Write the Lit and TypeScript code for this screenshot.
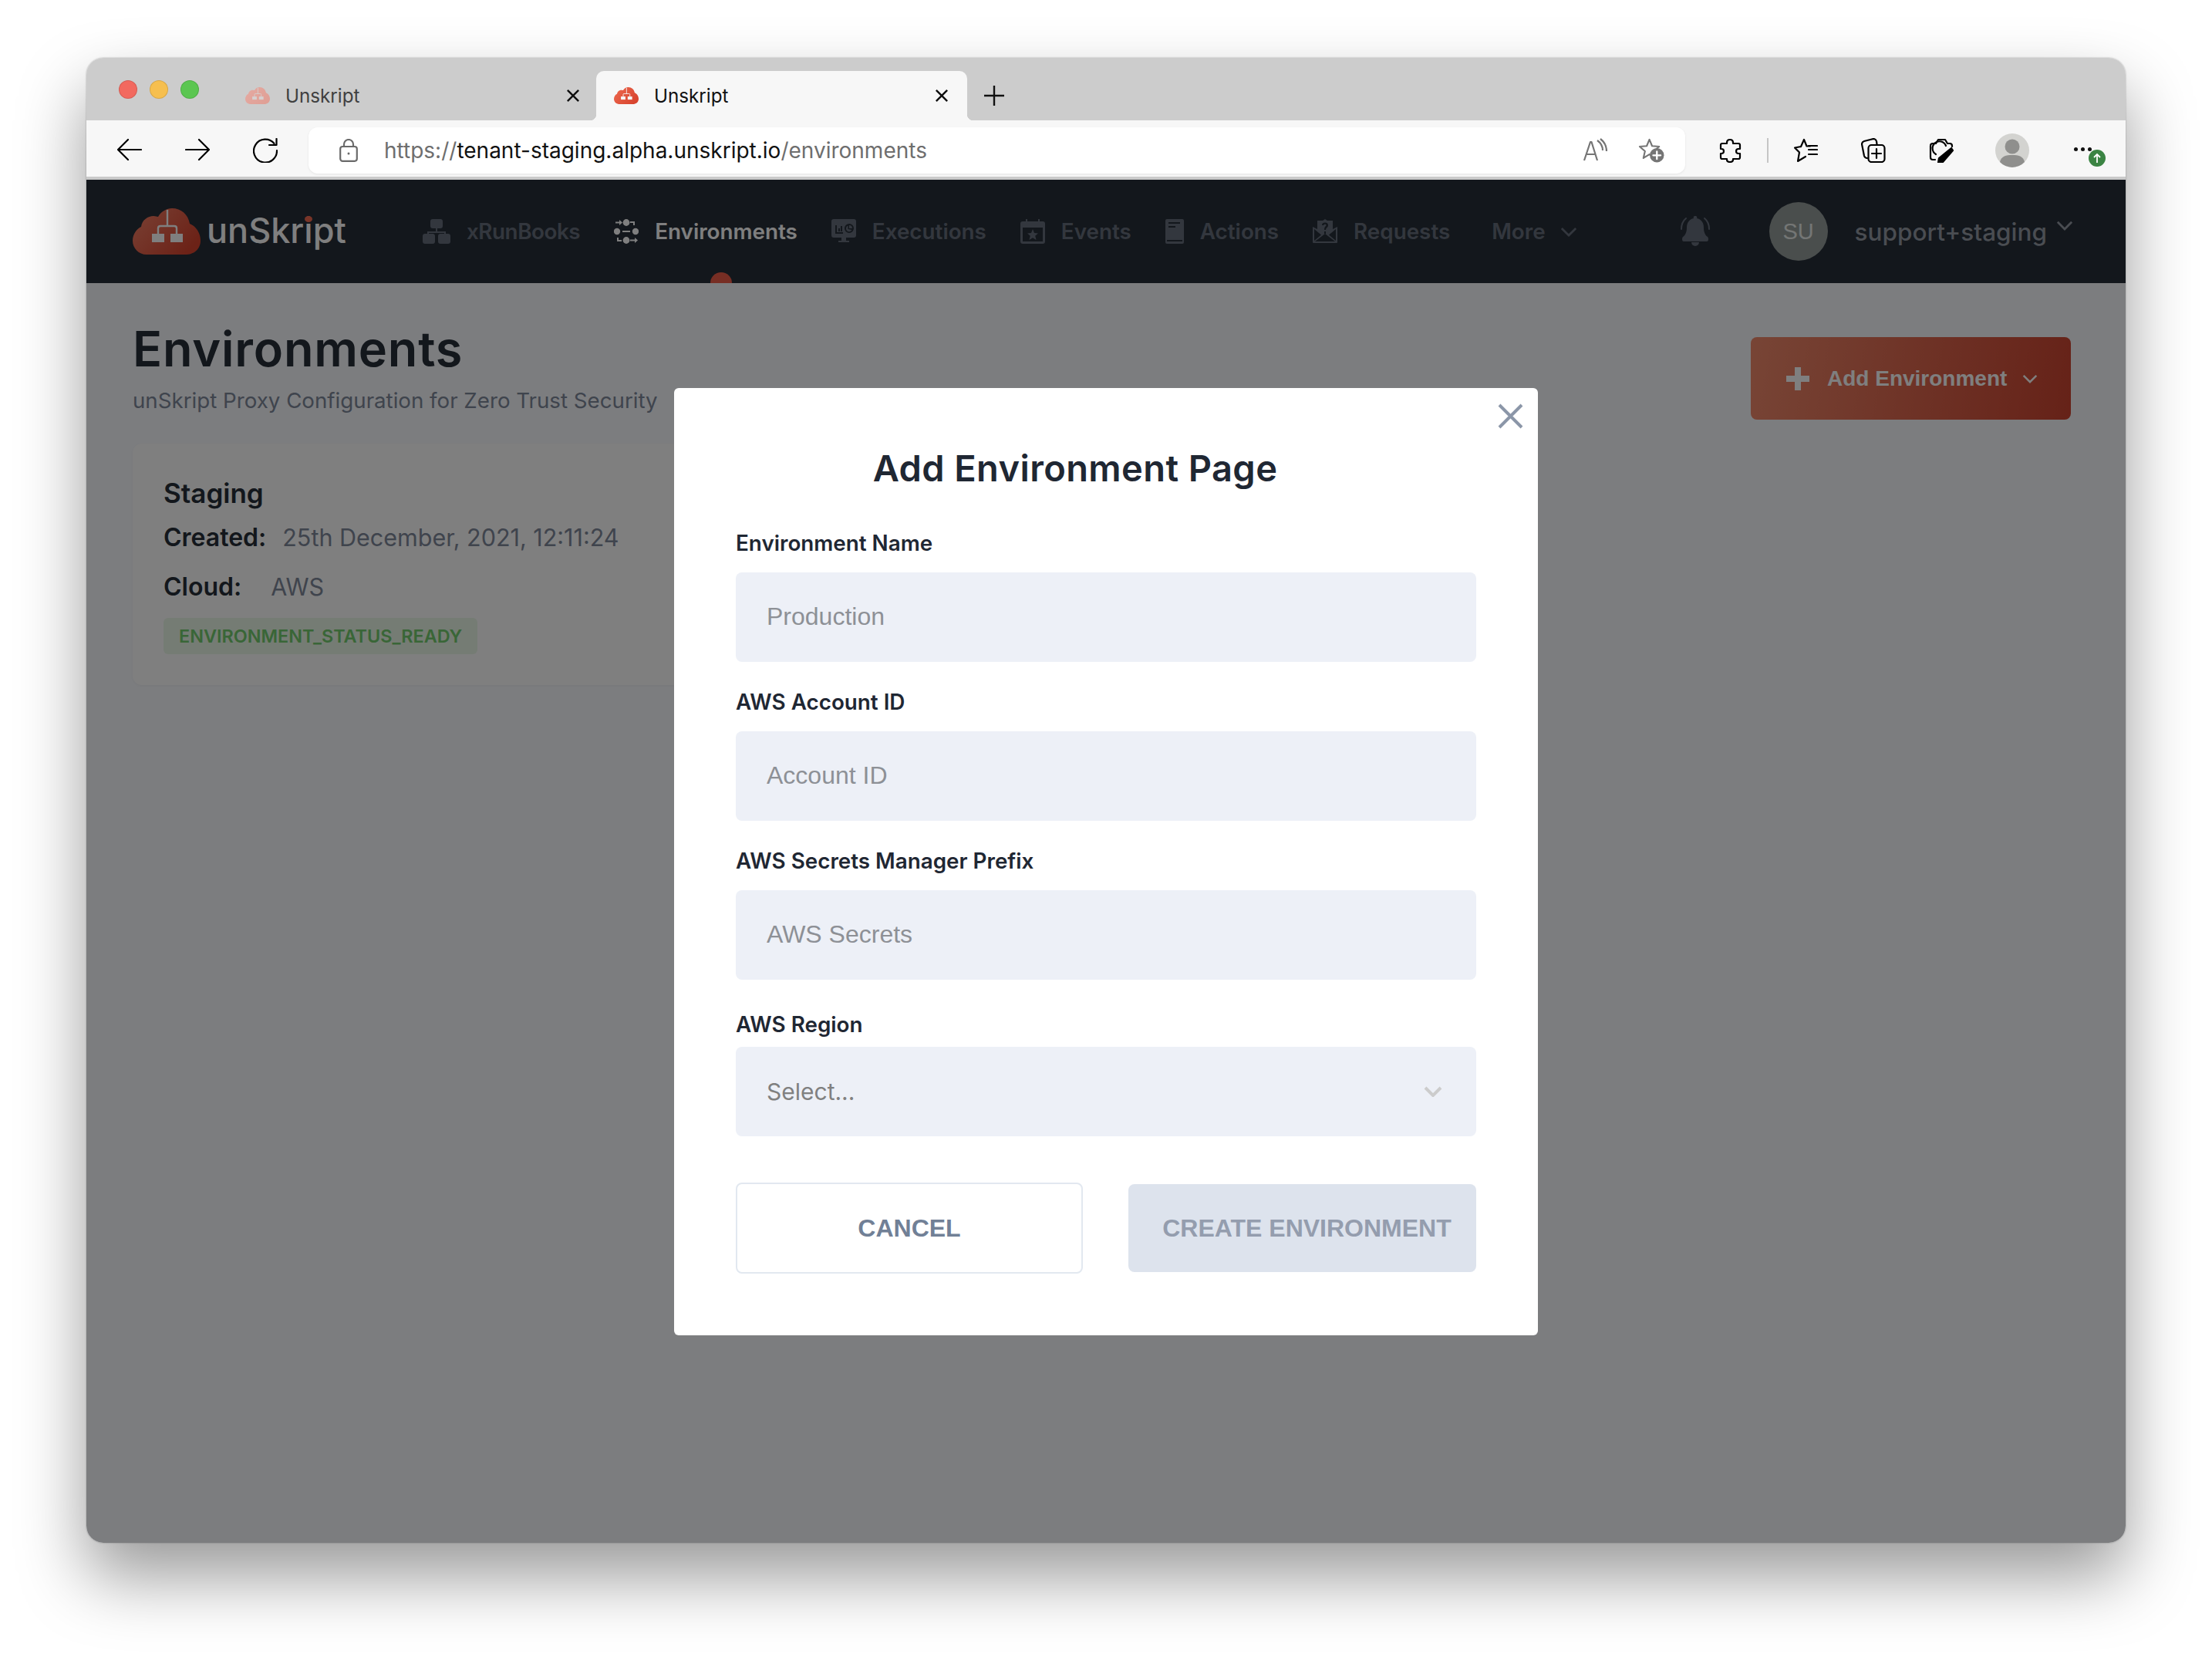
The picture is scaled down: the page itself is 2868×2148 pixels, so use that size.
import { LitElement, html, svg, css } from 'lit';
import { customElement } from 'lit/decorators.js';

// ==========================================
// Icons
// ==========================================

const cloud = (a: string, b: string, glyph: string, id: string) => html`
  <svg class="cloud" viewBox="0 0 88 60">
    <defs>
      <linearGradient id=${id} x1="0" y1="0" x2="1" y2="0.6">
        <stop offset="0" stop-color=${a}></stop>
        <stop offset="1" stop-color=${b}></stop>
      </linearGradient>
    </defs>
    <path
      fill="url(#${id})"
      d="M18 60C8 60 0 52 0 42C0 33 6 26 11 24C12 15 20 10 27 10C30 10 31 11 33 11C37 4 44 0 51 0C63 0 72 8 74 20C82 23 88 32 88 42C88 52 80 60 70 60Z"
    ></path>
    <path fill="none" stroke=${glyph} stroke-width="2.4" d="M45 2V23M33 33V26Q33 23 36 23H54Q57 23 57 26V33"></path>
    <rect x="25" y="33" width="16" height="11" fill=${glyph}></rect>
    <rect x="49" y="33" width="16" height="11" fill=${glyph}></rect>
  </svg>
`;

const closeX = html`<svg class="tab-x" viewBox="0 0 14 14"><path d="M2 2L12 12M12 2L2 12"></path></svg>`;

const chevron = html`<svg viewBox="0 0 24 14"><path d="M2 2L12 12L22 2" fill="none" stroke="currentColor" stroke-width="3"></path></svg>`;

const star = 'M16 3L19.6 11.6L29 12.4L21.9 18.5L24 27.7L16 22.8L8 27.7L10.1 18.5L3 12.4L12.4 11.6Z';

const navIcons = {
  runbooks: html`<svg viewBox="0 0 36 32"><rect x="10" y="0" width="16" height="12" rx="3"></rect><path d="M17 12h2v4h11v3h-2v-1H8v1H6v-3h11z"></path><rect x="0" y="19" width="16" height="13" rx="3"></rect><rect x="20" y="19" width="16" height="13" rx="3"></rect></svg>`,
  env: html`<svg viewBox="0 0 32 32">
    <circle cx="16" cy="4.5" r="4.4"></circle><circle cx="4" cy="16" r="4.2"></circle><circle cx="28" cy="16" r="4.2"></circle><circle cx="16" cy="27.5" r="4.4"></circle>
    <path d="M2 3.5h5V1l4 3.5L7 8V5.5H2zM21 3h6v5h-2V5h-4zM11 15h10v2H11zM4 24h2v3h4v2H4zM21 26.500h6V24l4 3.500L27 31v-2.500h-6z"></path>
  </svg>`,
  exec: html`<svg viewBox="0 0 32 32">
    <path fill-rule="evenodd" d="M3 0H29Q32 0 32 3V21Q32 24 29 24H3Q0 24 0 21V3Q0 0 3 0ZM5 8V19H15V17H7V8ZM9 12V16H11V12ZM12 9V16H14V9ZM23 6A6 6 0 1 0 23 18A6 6 0 1 0 23 6Z"></path>
    <path d="M23 8V12H27A4 4 0 0 0 23 8ZM21.500 8.500A4 4 0 1 0 26.500 14L21.500 13Z"></path>
    <path d="M13 24H19V28H23V30H9V28H13Z"></path>
  </svg>`,
  events: html`<svg viewBox="0 0 32 32">
    <path fill-rule="evenodd" d="M7 0H9V3H23V0H25V3H29Q32 3 32 6V29Q32 32 29 32H3Q0 32 0 29V6Q0 3 3 3H7ZM3 11V29H29V11Z"></path>
    <path d="M16 13L18 18L23 18.500L19.200 21.800L20.500 27L16 24.200L11.500 27L12.800 21.800L9 18.500L14 18Z"></path>
  </svg>`,
  actions: html`<svg viewBox="0 0 24 32">
    <path fill-rule="evenodd" d="M2 0H22Q24 0 24 2V30Q24 32 22 32H2Q0 32 0 30V2Q0 0 2 0ZM4 4V6H19V4ZM4 9V11H13V9ZM2 27V29H22V27Z"></path>
  </svg>`,
  requests: html`<svg viewBox="0 0 32 32">
    <path fill-rule="evenodd" d="M16 0L19 2H26V13L32 10V30Q32 31 31 31H1Q0 31 0 30V10L6 13V2H13ZM15 16V19H17V16ZM12 8H14.200Q14.500 6.500 16 6.500Q17.500 6.500 17.500 8Q17.500 9 16 10Q15 11 15 14H17Q17 12 18.500 11Q20 10 20 8Q20 4.500 16 4.500Q12 4.500 12 8ZM2 13V28L11 20.500ZM30 13L21 20.500L30 28ZM3 29H29L16 19Z"></path>
  </svg>`,
  bell: svg`
    <path d="M19 0A2 2 0 0 1 21 3C27 4 30 9 30 15C30 21 32 25 35 27Q36 28 36 30Q36 33 34 33H4Q2 33 2 30Q2 28 3 27C6 25 8 21 8 15C8 9 11 4 17 3A2 2 0 0 1 19 0Z"></path>
    <path d="M14 34H24A5 5 0 0 1 14 34Z"></path>
    <path d="M7 3Q1 8 1 17M31 3Q37 8 37 17" fill="none" stroke="currentColor" stroke-width="2" stroke-linecap="round"></path>
  `,
};

// ==========================================
// Form data
// ==========================================

const fields = [
  { label: 'Environment Name', placeholder: 'Production' },
  { label: 'AWS Account ID', placeholder: 'Account ID' },
  { label: 'AWS Secrets Manager Prefix', placeholder: 'AWS Secrets' },
];

const navItems = [
  { label: 'xRunBooks', icon: navIcons.runbooks, cls: 'w36 tight' },
  { label: 'Environments', icon: navIcons.env, cls: 'w32 on' },
  { label: 'Executions', icon: navIcons.exec, cls: 'w32' },
  { label: 'Events', icon: navIcons.events, cls: 'w32' },
  { label: 'Actions', icon: navIcons.actions, cls: 'w24' },
  { label: 'Requests', icon: navIcons.requests, cls: 'w32' },
];

@customElement('app-root')
export class AppRoot extends LitElement {
  static styles = css`
    :host {
      display: block;
      width: 2868px;
      height: 2148px;
      padding: 75px 112px 148px;
      box-sizing: border-box;
      background: #fff;
      font-family: 'Inter', 'Liberation Sans', sans-serif;
    }

    * {
      box-sizing: border-box;
    }

    svg {
      display: block;
    }

    .window {
      height: 100%;
      display: flex;
      flex-direction: column;
      border-radius: 22px;
      overflow: hidden;
      box-shadow: 0 44px 88px rgba(0, 0, 0, 0.4), 0 0 2px rgba(0, 0, 0, 0.35);
    }

    /* Tab strip */
    .tabs {
      height: 81px;
      flex: none;
      display: flex;
      align-items: flex-end;
      background: #cccccc;
      padding-left: 42px;
    }

    .lights {
      align-self: flex-start;
      display: flex;
      gap: 16px;
      margin-top: 29px;
      width: 141px;
    }

    .light {
      width: 24px;
      height: 24px;
      border-radius: 50%;
      border: 1px solid rgba(0, 0, 0, 0.12);
    }

    .red { background: #f2695f; }
    .yellow { background: #f6bf4f; }
    .green { background: #5bc651; }

    .tab {
      position: relative;
      width: 481px;
      height: 64px;
      padding: 0 23px 0 23px;
      display: flex;
      align-items: center;
      gap: 20px;
      color: #3c3c3c;
      font-size: 24.2px;
    }

    .tab .cloud {
      width: 32px;
      height: 22px;
    }

    .tab.idle {
      width: 478px;
      padding-right: 20px;
      color: #404040;
    }

    .tab.active {
      background: #f7f7f7;
      border-radius: 10px 10px 0 0;
      color: #111;
    }

    .tab.active::before,
    .tab.active::after {
      content: '';
      position: absolute;
      bottom: 0;
      width: 8px;
      height: 8px;
    }

    .tab.active::before {
      left: -8px;
      background: radial-gradient(circle at 0 0, transparent 8px, #f7f7f7 8.5px);
    }

    .tab.active::after {
      right: -8px;
      background: radial-gradient(circle at 100% 0, transparent 8px, #f7f7f7 8.5px);
    }

    .tab-x {
      width: 20px;
      height: 20px;
      margin-left: auto;
      fill: none;
      stroke: #111;
      stroke-width: 1.7;
    }

    .newtab {
      width: 28px;
      height: 28px;
      margin: 0 0 18px 21px;
      fill: none;
      stroke: #111;
      stroke-width: 2.4;
    }

    /* Toolbar */
    .toolbar {
      height: 77px;
      flex: none;
      display: flex;
      align-items: center;
      padding: 4px 0 0 40px;
      gap: 56px;
      background: #f7f7f7;
      border-bottom: 4px solid #c9c9c9;
      position: relative;
    }

    .tool {
      width: 32px;
      height: 32px;
      flex: none;
      fill: none;
      stroke: #000;
      stroke-width: 2.2;
      stroke-linejoin: round;
      stroke-linecap: round;
    }

    .address {
      width: 1785px;
      height: 60px;
      margin-left: -16px;
      padding: 0 27px 0 40px;
      display: flex;
      align-items: center;
      background: #fff;
      border-radius: 12px;
      box-shadow: 0 1px 3px rgba(0, 0, 0, 0.08);
      font-size: 28px;
      color: #6e6e6e;
      white-space: nowrap;
    }

    .lock {
      width: 24px;
      height: 30px;
      flex: none;
      margin-right: 34px;
      fill: none;
      stroke: #6a6a6a;
      stroke-width: 2.2;
    }

    .address b {
      font-weight: 400;
      color: #111;
    }

    .address-tools {
      margin-left: auto;
      display: flex;
      align-items: center;
      gap: 39px;
    }

    .muted {
      stroke: #757575;
    }

    .tool.star-add {
      width: 35px;
      height: 33px;
    }

    .tools {
      display: flex;
      align-items: center;
      gap: 56px;
      margin-left: -14px;
    }

    .tools-group {
      display: flex;
      align-items: center;
      gap: 32px;
    }

    .divider {
      width: 2px;
      height: 32px;
      background: #c6c6c6;
    }

    .profile {
      width: 44px;
      height: 44px;
      margin: 0 2px 0 -2px;
      flex: none;
    }

    .more {
      position: relative;
      width: 26px;
      height: 6px;
      margin-top: -1px;
      display: flex;
      gap: 4px;
    }

    .more i {
      width: 5px;
      height: 5px;
      border-radius: 50%;
      background: #111;
    }

    .update {
      position: absolute;
      left: 19px;
      top: 3px;
      width: 22px;
      height: 22px;
      border-radius: 50%;
      background: #3b8443;
      display: flex;
      align-items: center;
      justify-content: center;
    }

    .update svg {
      width: 14px;
      height: 14px;
      fill: none;
      stroke: #fff;
      stroke-width: 1.800;
    }

    /* App content, the overlay sits on top of all of it */
    .viewport {
      position: relative;
      flex: 1;
      display: flex;
      flex-direction: column;
      min-height: 0;
    }

    .nav {
      position: relative;
      height: 134px;
      flex: none;
      overflow: hidden;
      display: flex;
      align-items: center;
      padding: 0 68px 0 60px;
      background: #262e38;
      color: #666e7c;
    }

    .logo {
      display: flex;
      align-items: center;
      gap: 8px;
      width: 376px;
      flex: none;
      color: #fff;
      font-size: 45px;
      font-weight: 500;
    }

    .logo > span {
      margin-top: -3px;
    }

    .logo .cloud {
      width: 88px;
      height: 60px;
    }

    .tittle-i {
      position: relative;
    }

    .tittle-i::after {
      content: '';
      position: absolute;
      left: 1px;
      top: 9px;
      width: 10px;
      height: 8px;
      border-radius: 50%;
      background: #f2694f;
    }

    .nav-list {
      display: flex;
      align-items: center;
      gap: 44px;
    }

    .nav-item {
      display: flex;
      align-items: center;
      gap: 21px;
      font-size: 27.800px;
      font-weight: 600;
    }

    .nav-item.tight {
      letter-spacing: -0.45px;
    }

    .nav-item svg {
      height: 32px;
      fill: currentColor;
    }

    .nav-item.w36 svg { width: 36px; }
    .nav-item.w32 svg { width: 32px; }
    .nav-item.w24 svg { width: 24px; }

    .nav-item.on {
      color: #fff;
    }

    .nav-more {
      display: flex;
      align-items: center;
      gap: 19px;
      margin-left: 54px;
      font-size: 27.800px;
      font-weight: 600;
    }

    .nav-more svg {
      width: 22px;
      height: 13px;
    }

    .nav-right {
      margin-left: auto;
      display: flex;
      align-items: center;
    }

    .bell {
      width: 38px;
      height: 40px;
      fill: currentColor;
      margin-right: 77px;
    }

    .avatar {
      width: 76px;
      height: 76px;
      border-radius: 50%;
      margin-right: 35px;
      display: flex;
      align-items: center;
      justify-content: center;
      background: #949c9a;
      color: #e8ecea;
      font-size: 29px;
      font-family: 'Liberation Sans', sans-serif;
    }

    .user {
      color: #949aa4;
      font-size: 31.500px;
      font-weight: 500;
    }

    .user-chevron {
      width: 22px;
      height: 12px;
      margin: -16px 0 0 12px;
      color: #949aa4;
    }

    .marker {
      position: absolute;
      left: 809px;
      top: 120px;
      width: 28px;
      height: 28px;
      border-radius: 50%;
      background: #ee5d48;
    }

    .page {
      flex: 1;
      background: #f8fafe;
      padding: 47px 71px 0 60px;
    }

    .page-head {
      display: flex;
      justify-content: space-between;
      align-items: flex-start;
    }

    h1 {
      margin: 0;
      font-size: 63px;
      line-height: 76px;
      font-weight: 600;
      letter-spacing: 0.8px;
      color: #262e38;
    }

    .sub {
      margin: 9px 0 0;
      font-size: 27.700px;
      line-height: 40px;
      color: #7e889a;
    }

    .add {
      width: 415px;
      height: 107px;
      margin-top: 23px;
      border: 0;
      border-radius: 8px;
      display: flex;
      align-items: center;
      padding: 0 0 0 46px;
      background: linear-gradient(100deg, #f08a6c, #cc4430);
      color: #fff;
      font: 700 28px 'Liberation Sans', sans-serif;
    }

    .add .plus {
      width: 30px;
      height: 30px;
      margin-right: 23px;
      fill: currentColor;
    }

    .add .down {
      width: 20px;
      height: 12px;
      margin-left: 20px;
    }

    .card {
      width: 900px;
      height: 313px;
      margin-top: 31px;
      padding: 41px 40px 0;
      border-radius: 12px;
      background: #fff;
      box-shadow: 0 1px 3px rgba(0, 0, 0, 0.04);
      color: #262e38;
    }

    .card h2 {
      margin: 0;
      font-size: 35px;
      line-height: 46px;
      font-weight: 600;
    }

    .row {
      display: flex;
      font-size: 30.500px;
      line-height: 44px;
      margin-top: 13px;
      color: #7e889a;
    }

    .row + .row {
      margin-top: 20px;
    }

    .row strong {
      color: #262e38;
      font-size: 32px;
      font-weight: 600;
    }

    .row .created { margin-right: 21px; }
    .row .cloud-label { margin-right: 38px; }

    .badge {
      display: inline-block;
      margin-top: 18px;
      height: 47px;
      padding: 0 20px;
      border-radius: 6px;
      background: #ebf8e8;
      color: #72cc6e;
      font-size: 23.400px;
      font-weight: 600;
      line-height: 47px;
    }

    /* Modal */
    .overlay {
      position: absolute;
      inset: 0;
      display: flex;
      align-items: center;
      justify-content: center;
      background: rgba(0, 0, 0, 0.5);
    }

    .modal {
      position: relative;
      width: 1120px;
      padding: 76px 80px 80px;
      border-radius: 6px;
      background: #fff;
      color: #1f2733;
    }

    .modal-x {
      position: absolute;
      top: 20px;
      right: 19px;
      width: 33px;
      height: 33px;
      fill: none;
      stroke: #8b96a8;
      stroke-width: 4;
    }

    .modal h3 {
      margin: 0;
      padding-right: 80px;
      text-align: center;
      font-size: 47px;
      line-height: 56px;
      font-weight: 600;
      letter-spacing: 0.4px;
    }

    .field {
      margin-top: 32px;
    }

    .modal h3 + .field {
      margin-top: 49px;
    }

    .field label {
      display: block;
      margin-bottom: 18px;
      font-size: 27.800px;
      line-height: 40px;
      font-weight: 600;
    }

    .field input {
      display: block;
      width: 100%;
      height: 116px;
      padding: 0 40px;
      border: 0;
      border-radius: 8px;
      background: #edf0f7;
      font: 32px 'Liberation Sans', sans-serif;
      outline: none;
    }

    .field input::placeholder {
      color: #8d9096;
      opacity: 1;
    }

    .field.region {
      margin-top: 38px;
    }

    .field.region label {
      margin-bottom: 9px;
    }

    .select {
      height: 116px;
      padding: 0 44px 0 40px;
      display: flex;
      align-items: center;
      justify-content: space-between;
      border-radius: 8px;
      background: #edf0f7;
      color: #808080;
      font-size: 30px;
    }

    .select svg {
      width: 24px;
      height: 14px;
      color: #cccccc;
    }

    .select svg path {
      stroke-width: 4;
    }

    .actions {
      display: grid;
      grid-template-columns: 450px 451px;
      justify-content: space-between;
      align-items: center;
      margin-top: 60px;
    }

    .actions button {
      border-radius: 8px;
      padding-top: 2px;
      font: 700 32px 'Liberation Sans', sans-serif;
    }

    .cancel {
      height: 118px;
      background: #fff;
      border: 2px solid #e2e8f0;
      color: #718096;
    }

    .actions .create {
      height: 114px;
      padding: 2px 0 0 12px;
      border: 0;
      background: #dde3ed;
      color: #949dae;
    }
  `;

  render() {
    return html`
      <div class="window">
        <div class="tabs">
          <div class="lights">
            <span class="light red"></span>
            <span class="light yellow"></span>
            <span class="light green"></span>
          </div>
          <div class="tab idle">
            ${cloud('#e5aaa2', '#e0a096', '#d6d0cf', 'fav-a')}
            <span>Unskript</span>
            ${closeX}
          </div>
          <div class="tab active">
            ${cloud('#ee6a50', '#d8452f', '#f7f7f7', 'fav-b')}
            <span>Unskript</span>
            ${closeX}
          </div>
          <svg class="newtab" viewBox="0 0 28 28"><path d="M14 1V27M1 14H27"></path></svg>
        </div>

        <div class="toolbar">
          <svg class="tool" viewBox="0 0 32 32"><path d="M31 15H2M14 2L1 15L14 28"></path></svg>
          <svg class="tool" viewBox="0 0 32 32"><path d="M1 15H30M18 2L31 15L18 28"></path></svg>
          <svg class="tool" viewBox="0 0 32 32"><path d="M30.500 1V9H21M27.500 7A15 15 0 1 0 31 16"></path></svg>
          <div class="address">
            <svg class="lock" viewBox="0 0 24 30">
              <rect x="1.200" y="10" width="21.600" height="18.800" rx="3"></rect>
              <path d="M6 10V7A6 6 0 0 1 18 7V10"></path>
              <circle cx="12" cy="19" r="1.500" fill="#6a6a6a" stroke="none"></circle>
            </svg>
            <span>https://<b>tenant-staging.alpha.unskript.io</b>/environments</span>
            <div class="address-tools">
              <svg class="tool muted" viewBox="0 0 32 32">
                <path d="M2 29L10 5H11.500L19 29M5 21H16.500M19 3Q26 8 26 16M23 1Q31 7 31 17" stroke-linecap="butt"></path>
              </svg>
              <svg class="tool muted star-add" viewBox="0 0 36 34">
                <path d=${star}></path>
                <circle cx="26" cy="24" r="9.500" fill="#757575" stroke="none"></circle>
                <path d="M26 19V29M21 24H31" stroke="#fff" stroke-width="2.400"></path>
              </svg>
            </div>
          </div>
          <div class="tools">
            <div class="tools-group">
              <svg class="tool" viewBox="0 0 32 32">
                <path d="M12 6Q12 2 16 2Q20 2 20 6V7H27Q29 7 29 9V14H27Q24 14 24 17Q24 20 27 20H29V25Q29 27 27 27H20V28Q20 31 16 31Q12 31 12 28V27H6Q4 27 4 25V20H5Q8 20 8 17Q8 14 5 14H4V9Q4 7 6 7H12Z"></path>
              </svg>
              <div class="divider"></div>
              <svg class="tool" viewBox="0 0 32 32">
                <path d="M10 11L14 2L17.500 10.500H22M10 11L2 12.500L8 18.500L6 30L16 24"></path>
                <path d="M20 15H31M20 21H31M20 10H31"></path>
              </svg>
            </div>
            <svg class="tool" viewBox="0 0 32 32">
              <path d="M8 26Q5 26 4 23L1 8Q1 5 4 4L16 1Q19 1 20 4L20.500 8"></path>
              <rect x="9.500" y="9" width="21" height="22" rx="4"></rect>
              <path d="M20 14V26M14 20H26"></path>
            </svg>
            <svg class="tool" viewBox="0 0 32 32">
              <path d="M8 28H5Q2 28 2 25V10Q2 7 5 7H9L12 2H21L24 7H27Q30 7 30 10V11"></path>
              <path d="M9 21A9 9 0 1 1 22 10"></path>
              <path d="M29 13L31 16L18 31L12 32L13 26Z" fill="#000"></path>
            </svg>
            <svg class="profile" viewBox="0 0 44 44">
              <circle cx="22" cy="22" r="22" fill="#d3d3d0"></circle>
              <ellipse cx="22" cy="17" rx="9.500" ry="9.500" fill="#8f8f8d"></ellipse>
              <path d="M6 37C8 29 14 28 22 28C30 28 36 29 38 37A22 22 0 0 1 6 37Z" fill="#8f8f8d"></path>
            </svg>
            <div class="more">
              <i></i><i></i><i></i>
              <span class="update">
                <svg viewBox="0 0 14 14"><path d="M7 13V2M3 6L7 2L11 6"></path></svg>
              </span>
            </div>
          </div>
        </div>

        <div class="viewport">
          <div class="nav">
            <div class="logo">
              ${cloud('#f4836a', '#d8452f', '#ffffff', 'logo')}
              <span>unSkr<span class="tittle-i">i</span>pt</span>
            </div>
            <div class="nav-list">
              ${navItems.map(
                (item) => html`
                  <div class="nav-item ${item.cls}">${item.icon}<span>${item.label}</span></div>
                `
              )}
            </div>
            <div class="nav-more"><span>More</span>${chevron}</div>
            <div class="nav-right">
              <svg class="bell" viewBox="0 0 38 40">${navIcons.bell}</svg>
              <div class="avatar">SU</div>
              <span class="user">support+staging</span>
              <div class="user-chevron">${chevron}</div>
            </div>
            <span class="marker"></span>
          </div>

          <div class="page">
            <div class="page-head">
              <div>
                <h1>Environments</h1>
                <p class="sub">unSkript Proxy Configuration for Zero Trust Security</p>
              </div>
              <button class="add">
                <svg class="plus" viewBox="0 0 30 30"><path d="M11 0H19V11H30V19H19V30H11V19H0V11H11Z"></path></svg>
                <span>Add Environment</span>
                <svg class="down" viewBox="0 0 24 14"><path d="M2 2L12 12L22 2" fill="none" stroke="currentColor" stroke-width="3"></path></svg>
              </button>
            </div>
            <div class="card">
              <h2>Staging</h2>
              <div class="row"><strong class="created">Created:</strong><span>25th December, 2021, 12:11:24</span></div>
              <div class="row"><strong class="cloud-label">Cloud:</strong><span>AWS</span></div>
              <span class="badge">ENVIRONMENT_STATUS_READY</span>
            </div>
          </div>

          <div class="overlay">
            <div class="modal">
              <svg class="modal-x" viewBox="0 0 33 33"><path d="M2 2L31 31M31 2L2 31"></path></svg>
              <h3>Add Environment Page</h3>
              ${fields.map(
                (f) => html`
                  <div class="field">
                    <label>${f.label}</label>
                    <input placeholder=${f.placeholder} />
                  </div>
                `
              )}
              <div class="field region">
                <label>AWS Region</label>
                <div class="select"><span>Select...</span>${chevron}</div>
              </div>
              <div class="actions">
                <button class="cancel">CANCEL</button>
                <button class="create">CREATE ENVIRONMENT</button>
              </div>
            </div>
          </div>
        </div>
      </div>
    `;
  }
}
